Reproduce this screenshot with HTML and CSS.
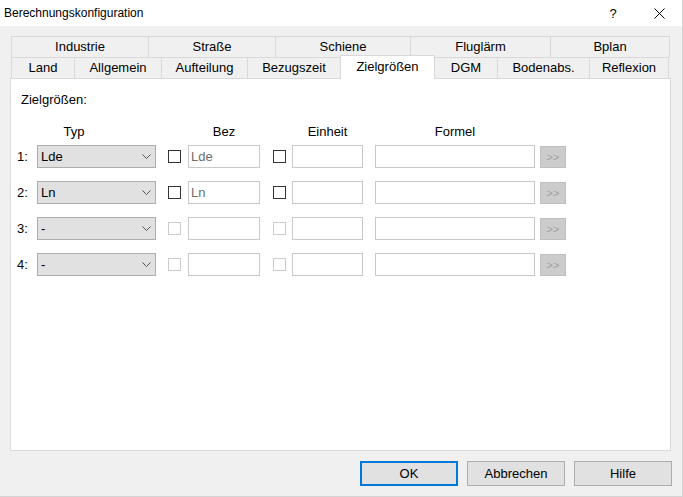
FILE: index.html
```html
<!doctype html>
<html lang="de">
	<head>
		<meta charset="UTF-8">
		<title>Berechnungskonfiguration</title>
		<link rel="stylesheet" href="styles.css">
	</head>
	<body>
		<div class="dialog">
			<div class="titlebar">
				<span class="title">Berechnungskonfiguration</span>
				<span class="tb-btn help">?</span>
				<span class="tb-btn close">
					<svg width="11" height="11" viewBox="0 0 11 11"><path d="M0.5 0.5 L10.5 10.5 M10.5 0.5 L0.5 10.5" stroke="#000" stroke-width="1" fill="none"/></svg>
				</span>
			</div>
			<div class="client">
				<div class="tabs">
					<div class="tab-row top">
						<div class="tab">Industrie</div>
						<div class="tab">Straße</div>
						<div class="tab">Schiene</div>
						<div class="tab">Fluglärm</div>
						<div class="tab">Bplan</div>
					</div>
					<div class="tab-row bottom">
						<div class="tab">Land</div>
						<div class="tab">Allgemein</div>
						<div class="tab">Aufteilung</div>
						<div class="tab">Bezugszeit</div>
						<div class="tab active">Zielgrößen</div>
						<div class="tab">DGM</div>
						<div class="tab">Bodenabs.</div>
						<div class="tab">Reflexion</div>
					</div>
				</div>
				<div class="panel">
					<div class="caption">Zielgrößen:</div>
					<div class="head">
						<span class="h-typ">Typ</span>
						<span class="h-bez">Bez</span>
						<span class="h-einheit">Einheit</span>
						<span class="h-formel">Formel</span>
					</div>
					<div class="row">
						<span class="num">1:</span>
						<div class="combo"><span>Lde</span><svg width="9" height="5" viewBox="0 0 9 5"><polyline points="0.5,0.5 4.5,4.5 8.5,0.5" stroke="#555" fill="none"/></svg></div>
						<span class="check c1"></span>
						<div class="edit bez">Lde</div>
						<span class="check c2"></span>
						<div class="edit einheit"></div>
						<div class="edit formel"></div>
						<div class="more">&gt;&gt;</div>
					</div>
					<div class="row">
						<span class="num">2:</span>
						<div class="combo"><span>Ln</span><svg width="9" height="5" viewBox="0 0 9 5"><polyline points="0.5,0.5 4.5,4.5 8.5,0.5" stroke="#555" fill="none"/></svg></div>
						<span class="check c1"></span>
						<div class="edit bez">Ln</div>
						<span class="check c2"></span>
						<div class="edit einheit"></div>
						<div class="edit formel"></div>
						<div class="more">&gt;&gt;</div>
					</div>
					<div class="row">
						<span class="num">3:</span>
						<div class="combo"><span>-</span><svg width="9" height="5" viewBox="0 0 9 5"><polyline points="0.5,0.5 4.5,4.5 8.5,0.5" stroke="#555" fill="none"/></svg></div>
						<span class="check c1 off"></span>
						<div class="edit bez"></div>
						<span class="check c2 off"></span>
						<div class="edit einheit"></div>
						<div class="edit formel"></div>
						<div class="more">&gt;&gt;</div>
					</div>
					<div class="row">
						<span class="num">4:</span>
						<div class="combo"><span>-</span><svg width="9" height="5" viewBox="0 0 9 5"><polyline points="0.5,0.5 4.5,4.5 8.5,0.5" stroke="#555" fill="none"/></svg></div>
						<span class="check c1 off"></span>
						<div class="edit bez"></div>
						<span class="check c2 off"></span>
						<div class="edit einheit"></div>
						<div class="edit formel"></div>
						<div class="more">&gt;&gt;</div>
					</div>
				</div>
				<div class="buttons">
					<div class="btn default">OK</div>
					<div class="btn">Abbrechen</div>
					<div class="btn">Hilfe</div>
				</div>
			</div>
		</div>
	</body>
</html>
```

FILE: styles.css
```css
html,body,div,span {
	margin: 0;
	padding: 0;
	box-sizing: border-box;
}
body {
	width: 683px;
	height: 497px;
	overflow: hidden;
	background-color: #f0f0f0;
	font-family: "Liberation Sans", Arial, sans-serif;
	font-size: 13px;
	color: #000;
}
.dialog {
	width: 683px;
	height: 497px;
	display: flex;
	flex-direction: column;
	border-right: 1px solid #d4d4d4;
	border-bottom: 1px solid #d4d4d4;
}
.titlebar {
	height: 26px;
	background-color: #fff;
	display: flex;
	align-items: center;
	padding-left: 4px;
	font-size: 12px;
}
.title {
	flex: 1;
}
.tb-btn {
	width: 46px;
	height: 26px;
	display: flex;
	align-items: center;
	justify-content: center;
}
.help {
	font-size: 13px;
}
.client {
	flex: 1;
	padding: 10px 11px 0 10px;
	display: flex;
	flex-direction: column;
}
.tabs {
	padding-left: 1px;
}
.tab-row {
	display: flex;
	align-items: flex-start;
	height: 21px;
}
.tab {
	height: 21px;
	line-height: 20px;
	text-align: center;
	border-top: 1px solid #d9d9d9;
	border-left: 1px solid #d9d9d9;
	background-color: #f0f0f0;
}
.tab:last-child {
	border-right: 1px solid #d9d9d9;
}
.top .tab:nth-child(1) { width: 137px; }
.top .tab:nth-child(2) { width: 127px; }
.top .tab:nth-child(3) { width: 135px; }
.top .tab:nth-child(4) { width: 140px; }
.top .tab:nth-child(5) { width: 120px; }
.bottom .tab:nth-child(1) { width: 63px; }
.bottom .tab:nth-child(2) { width: 87px; }
.bottom .tab:nth-child(3) { width: 86px; }
.bottom .tab:nth-child(4) { width: 93px; }
.bottom .tab:nth-child(5) { width: 95px; }
.bottom .tab:nth-child(6) { width: 63px; }
.bottom .tab:nth-child(7) { width: 92px; }
.bottom .tab:nth-child(8) { width: 80px; }
.tab.active {
	position: relative;
	z-index: 1;
	margin-top: -2px;
	height: 24px;
	line-height: 21px;
	background-color: #fff;
	border-right: 1px solid #d9d9d9;
	margin-right: -1px;
}
.panel {
	height: 373px;
	background-color: #fff;
	border: 1px solid #d9d9d9;
	padding: 13px 0 0 6px;
}
.caption {
	line-height: 15px;
	padding-left: 4px;
}
.head {
	display: flex;
	margin-top: 17px;
	line-height: 15px;
	padding-left: 20px;
}
.head span {
	text-align: center;
}
.h-typ { width: 74px; }
.h-bez { width: 72px; margin-left: 77px; }
.h-einheit { width: 71px; margin-left: 32px; }
.h-formel { width: 160px; margin-left: 12px; }
.row {
	display: flex;
	align-items: center;
	height: 23px;
	margin-top: 6px;
}
.row + .row {
	margin-top: 13px;
}
.num {
	width: 20px;
}
.combo {
	width: 119px;
	height: 23px;
	background-color: #e1e1e1;
	border: 1px solid #adadad;
	display: flex;
	align-items: center;
	justify-content: space-between;
	padding: 0 4px 0 3px;
}
.check {
	width: 13px;
	height: 13px;
	border: 1px solid #333;
	background-color: #fff;
}
.check.off {
	border-color: #cccccc;
}
.c1 { margin-left: 12px; }
.c2 { margin-left: 13px; }
.edit {
	height: 23px;
	border: 1px solid #c8c8c8;
	background-color: #fff;
	line-height: 21px;
	padding-left: 2px;
	color: #6d6d6d;
}
.bez { width: 72px; margin-left: 7px; }
.einheit { width: 71px; margin-left: 6px; }
.formel { width: 160px; margin-left: 12px; }
.more {
	width: 26px;
	height: 22px;
	margin-left: 5px;
	background-color: #cccccc;
	border: 1px solid #bfbfbf;
	color: #a0a0a0;
	font-size: 11px;
	line-height: 20px;
	text-align: center;
}
.buttons {
	display: flex;
	justify-content: flex-end;
	gap: 9px;
	margin-top: 10px;
	margin-right: -1px;
}
.btn {
	width: 98px;
	height: 25px;
	background-color: #e1e1e1;
	border: 1px solid #adadad;
	text-align: center;
	line-height: 23px;
}
.btn.default {
	border: 2px solid #0078d7;
	line-height: 21px;
}
```
